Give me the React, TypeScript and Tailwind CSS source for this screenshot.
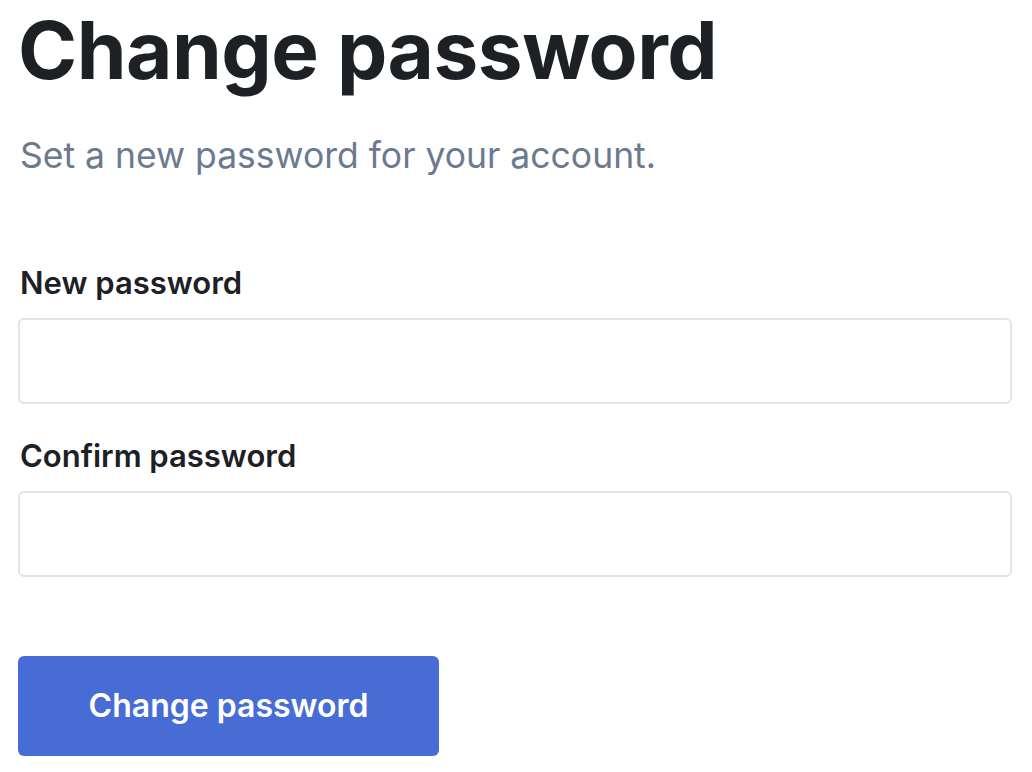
export default function App() {
  return (
    <div className="min-h-screen bg-white px-[18px] pt-[2px] font-['Inter','Liberation_Sans',sans-serif]">
      <h1 className="text-[80px] font-bold leading-[96px] tracking-[-0.5px] text-[#1d2025]">Change password</h1>
      <p className="mt-[36px] pl-[2px] text-[35.5px] leading-[44px] text-[#6b7a90]">Set a new password for your account.</p>

      <form className="mt-[87px] flex flex-col" onSubmit={(e) => e.preventDefault()}>
        <label className="pl-[2px] text-[31px] font-semibold leading-[36px] text-[#1d2025]">New password</label>
        <input
          type="password"
          className="mt-[17px] h-[86px] w-[994px] rounded-[6px] border-2 border-[#dfe4ea] px-4 outline-none"
        />
        <label className="mt-[34px] pl-[2px] text-[31px] font-semibold leading-[36px] text-[#1d2025]">Confirm password</label>
        <input
          type="password"
          className="mt-[17px] h-[86px] w-[994px] rounded-[6px] border-2 border-[#dfe4ea] px-4 outline-none"
        />
        <button
          type="submit"
          className="mt-[79px] h-[100px] w-[421px] rounded-[6px] bg-[#476cd6] text-[32px] font-semibold text-white"
        >
          Change password
        </button>
      </form>
    </div>
  );
}
